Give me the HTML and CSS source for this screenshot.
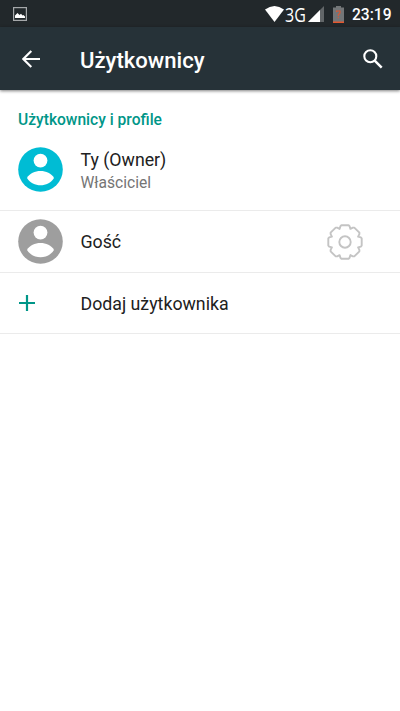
FILE: index.html
```html
<!DOCTYPE html>
<html lang="pl">
<head>
<meta charset="utf-8">
<title>Użytkownicy</title>
<link rel="stylesheet" href="styles.css">
</head>
<body>
<header class="status">
  <svg class="status-image" width="14" height="14" viewBox="0 0 14 14"><rect x=".6" y=".6" width="12.8" height="12.8" fill="none" stroke="#a5a8aa" stroke-width="1.2"/><path d="M2 11V8.500L4.500 6 6.500 8 8 6.800 9.500 8.500 10.500 8 12 9.500V11Z" fill="#fff"/></svg>
  <svg class="wifi" width="20" height="16" viewBox="0 0 20 16"><path d="M0 3.500Q9.500-3.500 19 3.500L9.500 16Z" fill="#fff"/></svg>
  <span class="network">3G</span>
  <svg class="signal" width="16" height="16" viewBox="0 0 16 16"><path d="M0 16 16 0V16Z" fill="#626668"/><path d="M0 16 12 4V16Z" fill="#fff"/></svg>
  <svg class="battery" width="11" height="17" viewBox="0 0 11 17"><path d="M0 1.500H3V0H8V1.500H11V17H0Z" fill="#737678"/><path d="M0 15.500H11V17H0Z" fill="#e4572e"/><path d="M3.500 6V5H7V7L5.300 8.800V10M5.300 11V12.300" fill="none" stroke="#d95935" stroke-width="1.100"/></svg>
  <span class="clock">23:19</span>
</header>
<nav class="appbar">
  <svg class="back" width="18" height="18" viewBox="0 0 18 18"><path d="M18 9H1.500M9.300 .9 1.300 9 9.300 17.100" fill="none" stroke="#fff" stroke-width="2.100"/></svg>
  <h1 class="title">Użytkownicy</h1>
  <svg class="search" width="20" height="20" viewBox="0 0 20 20"><circle cx="7.300" cy="7.200" r="6" fill="none" stroke="#fff" stroke-width="2.100"/><path d="M11.700 11.700 18.700 18.700" stroke="#fff" stroke-width="2.500"/></svg>
</nav>
<main>
  <h2 class="section">Użytkownicy i profile</h2>
  <div class="row owner">
    <svg class="avatar" width="45" height="45" viewBox="0 0 45 45"><circle cx="22.500" cy="22.500" r="22.300" fill="#00bcd4"/><circle cx="22.500" cy="13.600" r="6.900" fill="#fff"/><path d="M9 31C14 21.700 31 21.700 36 31C30 40.700 15 40.700 9 31Z" fill="#fff"/></svg>
    <div class="labels"><div class="name">Ty (Owner)</div><div class="summary">Właściciel</div></div>
  </div>
  <div class="row guest">
    <svg class="avatar" width="45" height="45" viewBox="0 0 45 45"><circle cx="22.500" cy="22.500" r="22.300" fill="#9e9e9e"/><circle cx="22.500" cy="13.600" r="6.900" fill="#fff"/><path d="M9 31C14 21.700 31 21.700 36 31C30 40.700 15 40.700 9 31Z" fill="#fff"/></svg>
    <div class="name">Gość</div>
    <svg class="gear" width="36" height="36" viewBox="-18 -18 36 36"><g fill="none" stroke="#c4c4c4" stroke-width="1.900" stroke-linejoin="round"><path d="M-3.600-16.700H3.600L4.600-15.800 5.400-13.100 7.900-14.400 9.300-14.400 14.400-9.300 14.400-7.900 13.100-5.400 15.800-4.600 16.700-3.600V3.600L15.800 4.600 13.100 5.400 14.400 7.900 14.400 9.300 9.300 14.400 7.900 14.400 5.400 13.100 4.600 15.800 3.600 16.700H-3.600L-4.600 15.800-5.400 13.100-7.900 14.400-9.300 14.400-14.400 9.300-14.400 7.900-13.100 5.400-15.800 4.600-16.700 3.600V-3.600L-15.800-4.600-13.100-5.400-14.400-7.900-14.400-9.300-9.300-14.400-7.900-14.400-5.400-13.100-4.600-15.800Z"/><circle r="5.700"/></g></svg>
  </div>
  <div class="row add">
    <svg class="plus" width="16" height="16" viewBox="0 0 16 16"><path d="M8 0V16M0 8H16" stroke="#009688" stroke-width="2.200"/></svg>
    <div class="name">Dodaj użytkownika</div>
  </div>
</main>
</body>
</html>
```
FILE: styles.css
```css
* { box-sizing: border-box; }
body { margin: 0; height: 711px; background: #fff; font-family: Roboto, sans-serif; color: #212121; overflow: hidden; }
svg { display: block; flex: none; }
.status { display: flex; height: 27px; padding: 0 9px 0 13px; background: #22282b; color: #fff; align-items: center; }
.status-image { margin-top: 1px; }
.wifi { margin: 1px 0 0 auto; }
.network { width: 22px; font: 20.5px/27px "Open Sans", sans-serif; white-space: nowrap; padding-top: 1px; transform: scaleX(.78); transform-origin: left; }
.signal { margin: 1px 9px 0 1px; }
.battery { margin: 1px 8px 0 0; }
.clock { width: 40px; margin-right: -1px; font-size: 15.6px; line-height: 27px; font-weight: 500; padding-top: 3px; white-space: nowrap; }
.appbar { display: flex; height: 63px; padding: 0 17px 0 22px; align-items: center; background: #263238; color: #fff; box-shadow: 0 1px 3px rgba(0,0,0,.5); }
.title { margin: 2px auto 0 40px; font-size: 22.1px; font-weight: 500; line-height: 28px; }
.section { margin: 0; padding: 20px 18px 0; height: 42px; font-size: 15.6px; line-height: 20px; font-weight: 500; color: #009688; }
.row { display: flex; align-items: center; padding-left: 18px; border-bottom: 1px solid #ebebeb; }
.avatar { margin-right: 17.5px; }
.name { font-size: 17.75px; line-height: 24px; white-space: nowrap; }
.summary { font-size: 15.6px; line-height: 20px; padding-top: 1px; color: #757575; }
.owner { height: 79px; align-items: flex-start; padding-top: 15px; }
.labels { padding-top: 1px; }
.guest { height: 62px; }
.gear { margin: 0 37.5px 0 auto; }
.guest .name { padding-top: 1px; }
.add { height: 61px; padding-left: 19px; }
.add .name { padding-top: 2px; }
.plus { margin-right: 45.5px; }
```
